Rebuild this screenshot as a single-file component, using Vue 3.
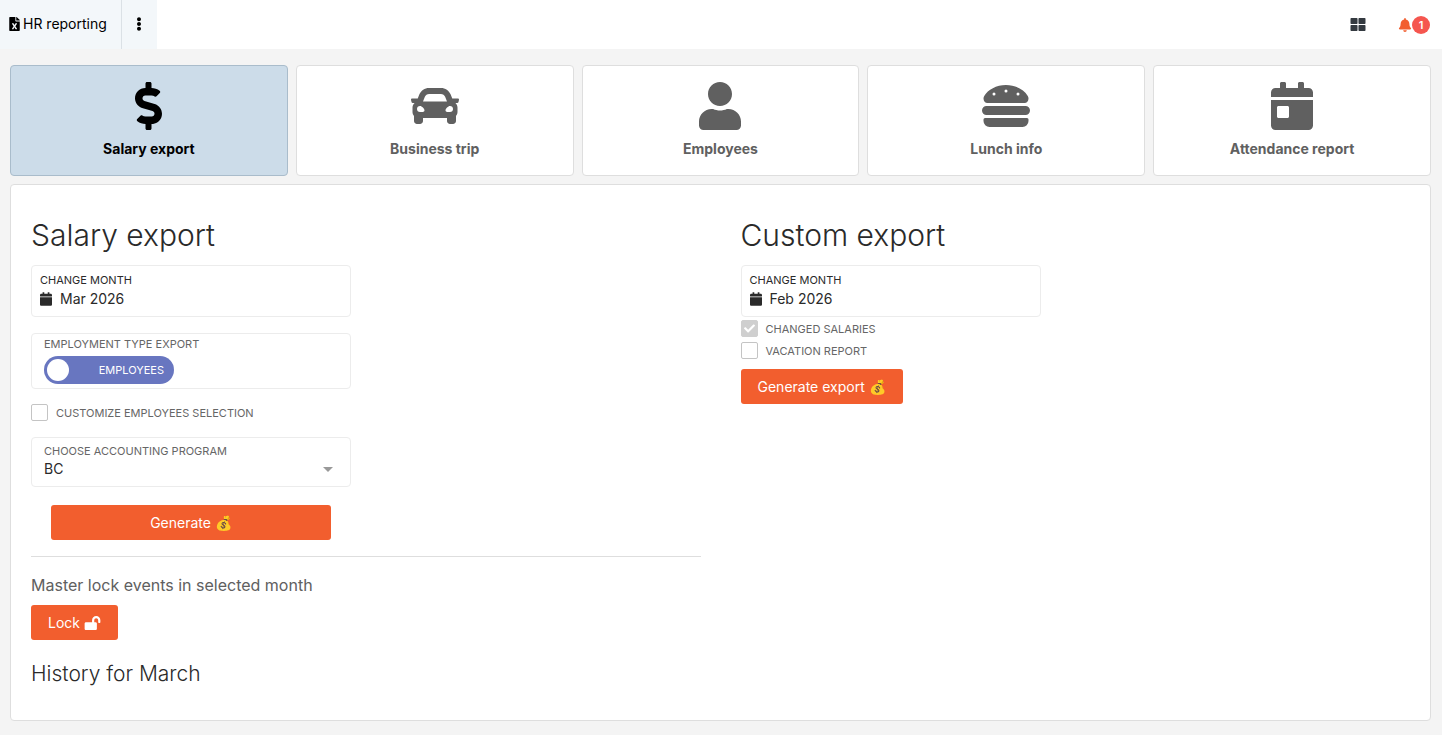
<template>
  <div class="app">
    <header class="topbar">
      <a class="module" href="#">
        <svg class="module-icon" viewBox="0 0 384 512"><path :d="icons.fileExcel" /></svg>
        <span>HR reporting</span>
      </a>
      <button class="more" type="button" aria-label="More">
        <svg viewBox="0 0 192 512"><path :d="icons.ellipsis" /></svg>
      </button>
      <div class="topbar-right">
        <button class="icon-btn" type="button" aria-label="Modules">
          <svg class="grid-icon" viewBox="0 0 512 512"><path :d="icons.thLarge" /></svg>
        </button>
        <button class="icon-btn bell" type="button" aria-label="Notifications">
          <svg class="bell-icon" viewBox="0 0 448 512"><path :d="icons.bell" /></svg>
          <span class="badge">{{ notifications }}</span>
        </button>
      </div>
    </header>

    <main class="content">
      <nav class="tabs">
        <button
          v-for="tab in tabs"
          :key="tab.name"
          type="button"
          class="tab"
          :class="{ active: tab.name === activeTab }"
          @click="activeTab = tab.name"
        >
          <svg :viewBox="tab.box"><path :d="tab.icon" /></svg>
          <span>{{ tab.name }}</span>
        </button>
      </nav>

      <div class="panel">
        <section class="column">
          <h1>Salary export</h1>
          <button class="month" type="button">
            <span class="label">Change month</span>
            <span class="month-value">
              <svg viewBox="0 0 448 512"><path :d="icons.calendar" /></svg>
              Mar 2026
            </span>
          </button>

          <div class="field toggle-field">
            <label class="label" for="employmentType">Employment type export</label>
            <label class="toggle">
              <input id="employmentType" v-model="contractors" type="checkbox" />
              <span class="knob"></span>
              <span class="label">Employees</span>
            </label>
          </div>

          <label class="check customize">
            <input v-model="customize" type="checkbox" />
            <svg class="tick" viewBox="0 0 512 512"><path :d="icons.check" /></svg>
            <span class="label">Customize employees selection</span>
          </label>

          <div class="field select-field">
            <label class="label" for="program">Choose accounting program</label>
            <div class="select">
              <select id="program" v-model="program">
                <option>BC</option>
              </select>
              <svg viewBox="0 0 10 5"><path d="M0 0h10L5 5z" /></svg>
            </div>
          </div>

          <button class="btn generate" type="button">Generate 💰</button>
          <hr />
          <p>Master lock events in selected month</p>
          <button class="btn" type="button">
            Lock
            <svg viewBox="0 0 576 512"><path :d="icons.lockOpen" /></svg>
          </button>
          <h2>History for March</h2>
        </section>

        <section class="column">
          <h1>Custom export</h1>
          <button class="month narrow" type="button">
            <span class="label">Change month</span>
            <span class="month-value">
              <svg viewBox="0 0 448 512"><path :d="icons.calendar" /></svg>
              Feb 2026
            </span>
          </button>
          <div class="checks">
            <label class="check">
              <input type="checkbox" checked disabled />
              <svg class="tick" viewBox="0 0 512 512"><path :d="icons.check" /></svg>
              <span class="label">Changed salaries</span>
            </label>
            <label class="check">
              <input v-model="vacation" type="checkbox" />
              <svg class="tick" viewBox="0 0 512 512"><path :d="icons.check" /></svg>
              <span class="label">Vacation report</span>
            </label>
          </div>
          <button class="btn" type="button">Generate export 💰</button>
        </section>
      </div>
    </main>
  </div>
</template>

<script setup>
import { ref } from 'vue'

const icons = {
  fileExcel: 'M224 136V0H24C10.7 0 0 10.7 0 24v464c0 13.3 10.7 24 24 24h336c13.3 0 24-10.7 24-24V160H248c-13.2 0-24-10.8-24-24zm60.1 106.5L224 336l60.1 93.5c5.1 8-.6 18.5-10.1 18.5h-34.9c-4.4 0-8.5-2.4-10.6-6.3C208.9 405.5 192 373 192 373c-6.4 14.8-10 20-36.6 68.8-2.1 3.9-6.1 6.3-10.5 6.3H110c-9.5 0-15.2-10.5-10.1-18.5l60.3-93.5-60.3-93.5c-5.2-8 .6-18.5 10.1-18.5h34.8c4.4 0 8.5 2.4 10.6 6.3 26.1 48.8 20 33.6 36.6 68.5 0 0 6.1-11.7 36.6-68.5 2.1-3.9 6.2-6.3 10.6-6.3H274c9.5-.1 15.2 10.4 10.1 18.4zM384 121.9v6.1H256V0h6.1c6.4 0 12.5 2.5 17 7l97.9 98c4.5 4.5 7 10.6 7 16.9z',
  ellipsis: 'M96 184c39.8 0 72 32.2 72 72s-32.2 72-72 72-72-32.2-72-72 32.2-72 72-72zM24 80c0 39.8 32.2 72 72 72s72-32.2 72-72S135.8 8 96 8 24 40.2 24 80zm0 352c0 39.8 32.2 72 72 72s72-32.2 72-72-32.2-72-72-72-72 32.2-72 72z',
  thLarge: 'M296 32h192c13.255 0 24 10.745 24 24v160c0 13.255-10.745 24-24 24H296c-13.255 0-24-10.745-24-24V56c0-13.255 10.745-24 24-24zm-80 0H24C10.745 32 0 42.745 0 56v160c0 13.255 10.745 24 24 24h192c13.255 0 24-10.745 24-24V56c0-13.255-10.745-24-24-24zM0 296v160c0 13.255 10.745 24 24 24h192c13.255 0 24-10.745 24-24V296c0-13.255-10.745-24-24-24H24c-13.255 0-24 10.745-24 24zm296 184h192c13.255 0 24-10.745 24-24V296c0-13.255-10.745-24-24-24H296c-13.255 0-24 10.745-24 24v160c0 13.255 10.745 24 24 24z',
  bell: 'M224 512c35.32 0 63.97-28.65 63.97-64H160.03c0 35.35 28.65 64 63.97 64zm215.39-149.71c-19.32-20.76-55.47-51.99-55.47-154.29 0-77.7-54.48-139.9-127.94-155.16V32c0-17.67-14.32-32-31.98-32s-31.98 14.33-31.98 32v20.84C118.56 68.1 64.08 130.3 64.08 208c0 102.3-36.15 133.53-55.47 154.29-6 6.45-8.66 14.16-8.61 21.71.11 16.4 12.98 32 32.1 32h383.8c19.12 0 32-15.6 32.1-32 .05-7.55-2.61-15.27-8.61-21.71z',
  calendar: 'M12 192h424c6.6 0 12 5.4 12 12v260c0 26.5-21.5 48-48 48H48c-26.5 0-48-21.5-48-48V204c0-6.6 5.4-12 12-12zm436-44v-36c0-26.5-21.5-48-48-48h-48V12c0-6.6-5.4-12-12-12h-40c-6.6 0-12 5.4-12 12v52H160V12c0-6.6-5.4-12-12-12h-40c-6.6 0-12 5.4-12 12v52H48C21.5 64 0 85.5 0 112v36c0 6.6 5.4 12 12 12h424c6.6 0 12-5.4 12-12z',
  check: 'M173.898 439.404l-166.4-166.4c-9.997-9.997-9.997-26.206 0-36.204l36.203-36.204c9.997-9.998 26.207-9.998 36.204 0L192 312.69 432.095 72.596c9.997-9.997 26.207-9.997 36.204 0l36.203 36.204c9.997 9.997 9.997 26.206 0 36.204l-294.4 294.401c-9.998 9.997-26.207 9.997-36.204-.001z',
  lockOpen: 'M423.5 0C339.5.3 272 69.5 272 153.5V224H48c-26.5 0-48 21.5-48 48v192c0 26.5 21.5 48 48 48h352c26.5 0 48-21.5 48-48V272c0-26.5-21.5-48-48-48h-48v-71.1c0-39.6 31.7-72.5 71.3-72.9 40-.4 72.7 32.1 72.7 72v80c0 13.3 10.7 24 24 24h32c13.3 0 24-10.7 24-24v-80C576 68 507.5-.3 423.5 0z'
}

const tabs = [
  {
    name: 'Salary export',
    box: '0 0 288 512',
    icon: 'M209.2 233.4l-108-31.6C88.7 198.2 80 186.5 80 173.5c0-16.3 13.2-29.5 29.5-29.5h66.3c12.2 0 24.2 3.7 34.2 10.5 6.1 4.1 14.3 3.1 19.5-2l34.8-34c7.1-6.9 6.1-18.4-1.8-24.5C238 74.8 207.4 64.1 176 64V16c0-8.8-7.2-16-16-16h-32c-8.8 0-16 7.2-16 16v48h-2.5C45.8 64-5.4 118.7.5 183.6c4.2 46.1 39.4 83.6 83.8 96.6l102.5 30c12.5 3.7 21.2 15.3 21.2 28.3 0 16.3-13.2 29.5-29.5 29.5h-66.3C100 368 88 364.3 78 357.5c-6.1-4.1-14.3-3.1-19.5 2l-34.8 34c-7.1 6.9-6.1 18.4 1.8 24.5 24.5 19.2 55.1 29.9 86.5 30v48c0 8.8 7.2 16 16 16h32c8.8 0 16-7.2 16-16v-48.2c46.6-.9 90.3-28.6 105.7-72.7 21.5-61.6-14.6-124.8-72.5-141.7z'
  },
  {
    name: 'Business trip',
    box: '0 0 512 512',
    icon: 'M499.99 176h-59.87l-16.64-41.6C406.38 91.63 365.57 64 319.5 64h-127c-46.06 0-86.88 27.63-103.99 70.4L71.87 176H12.01C4.2 176-1.53 183.34.37 190.91l6 24C7.7 220.25 12.5 224 18.01 224h20.07C24.65 235.73 16 252.78 16 272v48c0 16.12 6.16 30.67 16 41.93V416c0 17.67 14.33 32 32 32h32c17.67 0 32-14.33 32-32v-32h256v32c0 17.67 14.33 32 32 32h32c17.67 0 32-14.33 32-32v-54.07c9.84-11.25 16-25.8 16-41.93v-48c0-19.22-8.65-36.27-22.07-48H494c5.51 0 10.31-3.75 11.64-9.09l6-24c1.89-7.57-3.84-14.91-11.65-14.91zm-352.06-17.83c7.29-18.22 24.94-30.17 44.57-30.17h127c19.63 0 37.28 11.95 44.57 30.17L384 208H128l19.93-49.83zM96 319.8c-19.2 0-32-12.76-32-31.9S76.8 256 96 256s48 28.71 48 47.85-28.8 15.95-48 15.95zm320 0c-19.2 0-48 3.19-48-15.95S396.8 256 416 256s32 12.76 32 31.9-12.8 31.9-32 31.9z'
  },
  {
    name: 'Employees',
    box: '0 0 448 512',
    icon: 'M224 256c70.7 0 128-57.3 128-128S294.7 0 224 0 96 57.3 96 128s57.3 128 128 128zm89.6 32h-16.7c-22.2 10.2-46.9 16-72.9 16s-50.6-5.8-72.9-16h-16.7C60.2 288 0 348.2 0 422.4V464c0 26.5 21.5 48 48 48h352c26.5 0 48-21.5 48-48v-41.6c0-74.2-60.2-134.4-134.4-134.4z'
  },
  {
    name: 'Lunch info',
    box: '0 0 512 512',
    icon: 'M464 256H48a48 48 0 0 0 0 96h416a48 48 0 0 0 0-96zm16 128H32a16 16 0 0 0-16 16v16a64 64 0 0 0 64 64h352a64 64 0 0 0 64-64v-16a16 16 0 0 0-16-16zM58.64 224h394.72c34.57 0 54.62-43.9 34.82-75.88C448 83.2 359.55 32.1 256 32c-103.54.1-192 51.2-232.18 116.11C4 180.09 24.07 224 58.64 224zM384 112a16 16 0 1 1-16 16 16 16 0 0 1 16-16zM256 80a16 16 0 1 1-16 16 16 16 0 0 1 16-16zm-128 32a16 16 0 1 1-16 16 16 16 0 0 1 16-16z'
  },
  {
    name: 'Attendance report',
    box: '0 0 448 512',
    icon: 'M0 464c0 26.5 21.5 48 48 48h352c26.5 0 48-21.5 48-48V192H0v272zm64-192c0-8.8 7.2-16 16-16h96c8.8 0 16 7.2 16 16v96c0 8.8-7.2 16-16 16H80c-8.8 0-16-7.2-16-16v-96zM400 64h-48V16c0-8.8-7.2-16-16-16h-32c-8.8 0-16 7.2-16 16v48H160V16c0-8.8-7.2-16-16-16h-32c-8.8 0-16 7.2-16 16v48H48C21.5 64 0 85.5 0 112v48h448v-48c0-26.5-21.5-48-48-48z'
  }
]

const activeTab = ref('Salary export')
const notifications = ref(1)
const contractors = ref(false)
const customize = ref(false)
const vacation = ref(false)
const program = ref('BC')
</script>

<style>
body {
  margin: 0;
  background: #f4f4f4;
}
</style>

<style scoped>
.app {
  font-family: Inter, "Liberation Sans", sans-serif;
  font-size: 14px;
  line-height: 20px;
  color: #2a2a2a;
}

.app * {
  box-sizing: border-box;
}

button,
select {
  font: inherit;
  color: inherit;
  cursor: pointer;
}

svg {
  fill: currentColor;
}

.topbar {
  display: flex;
  height: 49px;
  background: #fff;
}

.module {
  display: flex;
  align-items: center;
  gap: 3px;
  padding: 0 14px 1px 9px;
  border-right: 1px solid #dbe1e6;
  background: #f3f7fa;
  color: #000;
  text-decoration: none;
}

.module-icon {
  width: 11px;
  height: 14px;
}

.more {
  display: flex;
  align-items: center;
  justify-content: center;
  width: 35px;
  padding: 0 0 1px;
  border: none;
  background: #f3f7fa;
  color: #000;
}

.more svg {
  width: 6px;
  height: 14px;
}

.topbar-right {
  display: flex;
  gap: 32px;
  margin-left: auto;
  padding-right: 12px;
}

.icon-btn {
  display: flex;
  align-items: center;
  padding: 0;
  border: none;
  background: none;
  color: #343a40;
}

.grid-icon {
  width: 16px;
  height: 15px;
}

.bell {
  color: #f25e2e;
}

.bell-icon {
  width: 14px;
  height: 14px;
}

.badge {
  width: 18px;
  height: 18px;
  border-radius: 50%;
  background: #f5564f;
  color: #fff;
  font-size: 11px;
  font-weight: 600;
  line-height: 18px;
  text-align: center;
}

.content {
  padding: 16px 11px 14px 10px;
}

.tabs {
  display: grid;
  grid-template-columns: repeat(5, 1fr);
  gap: 8px;
}

.tab {
  display: flex;
  flex-direction: column;
  align-items: center;
  gap: 9px;
  height: 111px;
  padding: 16px 8px;
  border: 1px solid #dedede;
  border-radius: 4px;
  background: #fff;
  color: #606060;
  font-weight: 700;
}

.tab svg {
  height: 48px;
}

.tab.active {
  border-color: #a9bccb;
  background: #ccdce9;
  color: #000;
}

.panel {
  display: grid;
  grid-template-columns: 1fr 1fr;
  gap: 40px;
  margin-top: 8px;
  padding: 30px 20px 32px;
  border: 1px solid #dedede;
  border-radius: 4px;
  background: #fff;
}

h1 {
  margin: 0 0 10px;
  font-size: 30px;
  font-weight: 300;
  line-height: 40px;
}

h2 {
  margin: 20px 0 0;
  font-size: 21px;
  font-weight: 300;
  line-height: 28px;
}

.label {
  font-size: 11px;
  line-height: 14px;
  text-transform: uppercase;
}

.month {
  display: flex;
  flex-direction: column;
  justify-content: center;
  gap: 2px;
  width: 320px;
  height: 52px;
  padding: 0 8px;
  border: 1px solid #ececec;
  border-radius: 4px;
  background: #fff;
  text-align: left;
}

.month.narrow {
  width: 300px;
}

.month-value {
  display: flex;
  align-items: center;
  gap: 8px;
}

.month-value svg {
  width: 12px;
  height: 14px;
}

.field {
  display: flex;
  flex-direction: column;
  width: 320px;
  padding: 0 12px;
  border: 1px solid #ececec;
  border-radius: 4px;
  color: #666;
}

.toggle-field {
  gap: 5px;
  height: 56px;
  margin-top: 16px;
  padding-top: 3px;
}

.toggle {
  display: flex;
  align-items: center;
  justify-content: space-between;
  width: 130px;
  height: 28px;
  padding: 0 10px 0 3px;
  border-radius: 14px;
  background: #6876c0;
  color: #fff;
  cursor: pointer;
}

.toggle input {
  position: absolute;
  opacity: 0;
}

.knob {
  width: 22px;
  height: 22px;
  border-radius: 50%;
  background: #fff;
}

.check {
  display: grid;
  grid-template-columns: 17px auto;
  justify-content: start;
  align-items: center;
  column-gap: 8px;
  height: 17px;
  color: #666;
  cursor: pointer;
}

.check input {
  grid-area: 1 / 1;
  appearance: none;
  width: 17px;
  height: 17px;
  margin: 0;
  border: 1px solid #c4c4c4;
  border-radius: 2px;
  background: #fff;
}

.check input:disabled {
  border-color: #cfcfcf;
  background: #cfcfcf;
}

.tick {
  display: none;
  grid-area: 1 / 1;
  justify-self: center;
  width: 11px;
  height: 11px;
  color: #fff;
}

.check input:checked:not(:disabled) {
  border-color: #6876c0;
  background: #6876c0;
}

.check input:checked + .tick {
  display: block;
}

.customize {
  margin: 15px 0 16px;
}

.checks {
  display: flex;
  flex-direction: column;
  gap: 5px;
  margin: 3px 0 10px;
}

.select-field {
  height: 50px;
  padding-top: 6px;
}

.select {
  display: grid;
  align-items: center;
  height: 22px;
}

.select select {
  grid-area: 1 / 1;
  appearance: none;
  width: 100%;
  padding: 0;
  border: none;
  background: none;
  color: #2a2a2a;
}

.select svg {
  grid-area: 1 / 1;
  justify-self: end;
  width: 10px;
  height: 5px;
  margin-right: 5px;
  color: #999;
  pointer-events: none;
}

.btn {
  display: flex;
  align-items: center;
  justify-content: center;
  gap: 4px;
  height: 35px;
  padding: 0 17px;
  border: none;
  border-radius: 3px;
  background: #f25e2e;
  color: #fff;
}

.btn svg {
  width: 17px;
  height: 14px;
}

.generate {
  width: 280px;
  margin: 18px 20px 16px;
}

hr {
  margin: 0;
  border: none;
  border-top: 1px solid #dedede;
}

p {
  margin: 18px 0 10px;
  color: #606060;
  font-size: 16px;
}
</style>
